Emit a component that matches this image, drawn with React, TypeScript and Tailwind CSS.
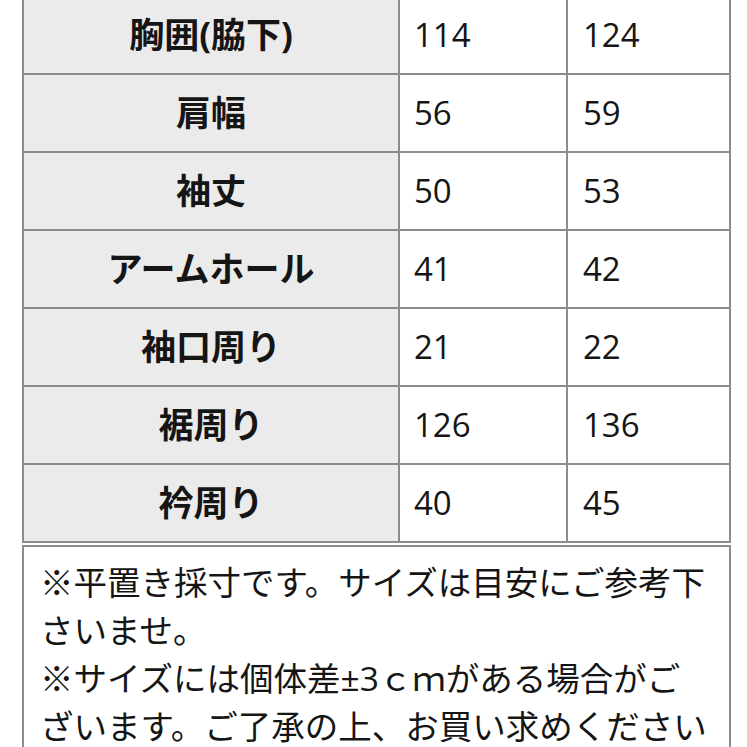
const rows: [string, string, string][] = [
  ["胸囲(脇下)", "114", "124"],
  ["肩幅", "56", "59"],
  ["袖丈", "50", "53"],
  ["アームホール", "41", "42"],
  ["袖口周り", "21", "22"],
  ["裾周り", "126", "136"],
  ["衿周り", "40", "45"],
];

const font = { fontFamily: '"Open Sans", "Noto Sans CJK JP", sans-serif' };

export default function App() {
  return (
    <div className="h-[747px] w-[747px] overflow-hidden bg-white text-[#151515]" style={font}>
      <div className="-mt-[5px] ml-[22px] w-[709px]">
        <div className="grid grid-cols-[374px_166px_161px] gap-[2px] border-2 border-[#8c8c8c] bg-[#8c8c8c]">
          {rows.map(([label, a, b]) => (
            <div key={label} className="contents">
              <div className="flex h-[76px] items-center justify-center bg-[#ebebeb] text-[35px] font-bold">
                {label}
              </div>
              <div className="flex h-[76px] items-center bg-white pl-[14px] text-[33px]">{a}</div>
              <div className="flex h-[76px] items-center bg-white pl-[15px] text-[33px]">{b}</div>
            </div>
          ))}
        </div>
        <div className="mt-[2px] h-[220px] border-2 border-[#8c8c8c] pl-[16px] pt-[11px] text-[33.5px] leading-[48px] whitespace-nowrap">
          ※平置き採寸です。サイズは目安にご参考下
          <br />
          さいませ。
          <br />
          ※サイズには個体差±3ｃｍがある場合がご
          <br />
          ざいます。ご了承の上、お買い求めください
        </div>
      </div>
    </div>
  );
}
